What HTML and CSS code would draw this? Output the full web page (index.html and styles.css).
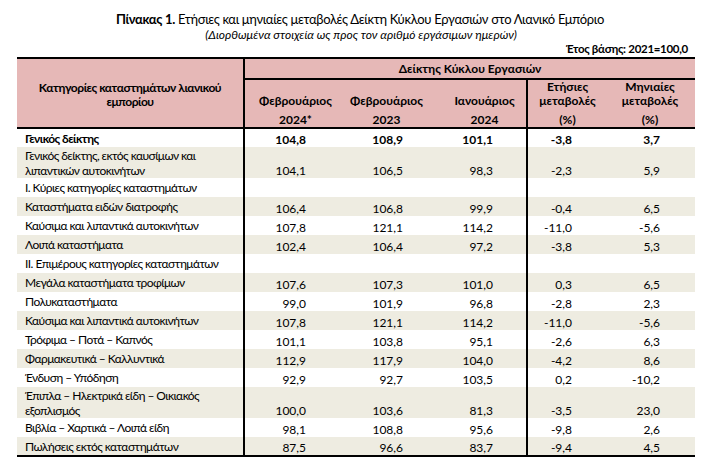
FILE: index.html
```html
<!DOCTYPE html>
<html lang="el">
<head>
<meta charset="utf-8">
<title>Πίνακας 1</title>
<link rel="stylesheet" href="styles.css">
</head>
<body>
<div class="page">
  <div class="title"><b>Πίνακας 1.</b> Ετήσιες και μηνιαίες μεταβολές Δείκτη Κύκλου Εργασιών στο Λιανικό Εμπόριο</div>
  <div class="subtitle">(Διορθωμένα στοιχεία ως προς τον αριθμό εργάσιμων ημερών)</div>
  <div class="base">Έτος βάσης: 2021=100,0</div>
  <table class="tbl">
    <colgroup>
      <col class="c-cat"><col class="c-n1"><col class="c-n2"><col class="c-n3"><col class="c-n4"><col class="c-n5">
    </colgroup>
    <thead>
      <tr class="h1">
        <th class="cat-h" rowspan="2">Κατηγορίες καταστημάτων λιανικού<br>εμπορίου</th>
        <th class="idx-h" colspan="5">Δείκτης Κύκλου Εργασιών</th>
      </tr>
      <tr class="h2">
        <th>Φεβρουάριος<span class="ln">2024*</span></th>
        <th>Φεβρουάριος<span class="ln">2023</span></th>
        <th>Ιανουάριος<span class="ln">2024</span></th>
        <th>Ετήσιες<br>μεταβολές<span class="ln">(%)</span></th>
        <th>Μηνιαίες<br>μεταβολές<span class="ln">(%)</span></th>
      </tr>
    </thead>
    <tbody>
      <tr class="bold"><td>Γενικός δείκτης</td><td>104,8</td><td>108,9</td><td>101,1</td><td>-3,8</td><td>3,7</td></tr>
      <tr class="alt dbl"><td>Γενικός δείκτης, εκτός καυσίμων και<br>λιπαντικών αυτοκινήτων</td><td>104,1</td><td>106,5</td><td>98,3</td><td>-2,3</td><td>5,9</td></tr>
      <tr><td>Ι. Κύριες κατηγορίες καταστημάτων</td><td></td><td></td><td></td><td></td><td></td></tr>
      <tr class="alt"><td>Καταστήματα ειδών διατροφής</td><td>106,4</td><td>106,8</td><td>99,9</td><td>-0,4</td><td>6,5</td></tr>
      <tr><td>Καύσιμα και λιπαντικά αυτοκινήτων</td><td>107,8</td><td>121,1</td><td>114,2</td><td>-11,0</td><td>-5,6</td></tr>
      <tr class="alt"><td>Λοιπά καταστήματα</td><td>102,4</td><td>106,4</td><td>97,2</td><td>-3,8</td><td>5,3</td></tr>
      <tr><td>ΙΙ. Επιμέρους κατηγορίες καταστημάτων</td><td></td><td></td><td></td><td></td><td></td></tr>
      <tr class="alt"><td>Μεγάλα καταστήματα τροφίμων</td><td>107,6</td><td>107,3</td><td>101,0</td><td>0,3</td><td>6,5</td></tr>
      <tr><td>Πολυκαταστήματα</td><td>99,0</td><td>101,9</td><td>96,8</td><td>-2,8</td><td>2,3</td></tr>
      <tr class="alt"><td>Καύσιμα και λιπαντικά αυτοκινήτων</td><td>107,8</td><td>121,1</td><td>114,2</td><td>-11,0</td><td>-5,6</td></tr>
      <tr><td>Τρόφιμα – Ποτά – Καπνός</td><td>101,1</td><td>103,8</td><td>95,1</td><td>-2,6</td><td>6,3</td></tr>
      <tr class="alt"><td>Φαρμακευτικά – Καλλυντικά</td><td>112,9</td><td>117,9</td><td>104,0</td><td>-4,2</td><td>8,6</td></tr>
      <tr><td>Ένδυση – Υπόδηση</td><td>92,9</td><td>92,7</td><td>103,5</td><td>0,2</td><td>-10,2</td></tr>
      <tr class="alt dbl"><td>Έπιπλα – Ηλεκτρικά είδη – Οικιακός<br>εξοπλισμός</td><td>100,0</td><td>103,6</td><td>81,3</td><td>-3,5</td><td>23,0</td></tr>
      <tr><td>Βιβλία – Χαρτικά – Λοιπά είδη</td><td>98,1</td><td>108,8</td><td>95,6</td><td>-9,8</td><td>2,6</td></tr>
      <tr class="alt last"><td>Πωλήσεις εκτός καταστημάτων</td><td>87,5</td><td>96,6</td><td>83,7</td><td>-9,4</td><td>4,5</td></tr>
    </tbody>
  </table>
</div>
</body>
</html>
```

FILE: styles.css
```css
html, body {
  margin: 0;
  padding: 0;
  background: #fff;
}
body {
  font-family: Lato, "Open Sans", "DejaVu Sans", sans-serif;
  color: #000;
}
.page {
  width: 678px;
  padding: 11px 20px 0 17px;
}
.title {
  text-align: center;
  font-size: 13px;
  letter-spacing: -0.33px;
  line-height: 16px;
  height: 16px;
  padding-left: 8px;
  white-space: nowrap;
}
.title b { font-weight: 700; }
.subtitle {
  text-align: center;
  font-style: italic;
  font-size: 12px;
  line-height: 14px;
  height: 14px;
  padding-left: 10px;
  margin-top: 1px;
}
.base {
  text-align: right;
  font-weight: 700;
  font-size: 11.5px;
  letter-spacing: -0.3px;
  line-height: 14px;
  height: 14px;
  padding-right: 7px;
}
.tbl {
  width: 678px;
  border-collapse: collapse;
  table-layout: fixed;
  font-size: 12px;
  margin-top: 1px;
}
.c-cat { width: 227px; }
.c-n1 { width: 95px; }
.c-n2 { width: 95px; }
.c-n3 { width: 93px; }
.c-n4 { width: 85px; }
.c-n5 { width: 83px; }

.tbl thead th {
  background: #e6b8b7;
  font-weight: 700;
  padding: 0;
}
.tbl thead tr:first-child th { border-top: 2px solid #000; }
.cat-h {
  text-align: center;
  vertical-align: middle;
  line-height: 14px;
  letter-spacing: -0.45px;
  padding-top: 3px !important;
  border-right: 2px solid #000;
  border-bottom: 2px solid #000;
}
.h1 { height: 21px; }
.idx-h {
  text-align: center;
  vertical-align: bottom;
  line-height: 16px;
  padding-bottom: 1px !important;
  border-bottom: 2px solid #000;
}
.h2 { height: 49px; }
.h2 th {
  text-align: center;
  vertical-align: bottom;
  line-height: 14px;
  padding-bottom: 0 !important;
  border-bottom: 2px solid #000;
}
.h2 .ln {
  display: block;
  margin-top: 5px;
  line-height: 14px;
}
.h2 th:nth-child(1) { padding-left: 7px !important; }
.h2 th:nth-child(3) { padding-left: 9px !important; }
.h2 th:nth-child(3) { border-right: 2px solid #000; }
.h2 th:nth-child(4) { padding-right: 5px !important; }
.h2 th:nth-child(5) { padding-right: 7px !important; }

.tbl tbody tr { height: 19px; }
.tbl tbody tr.dbl { height: 31px; }
.tbl tbody tr.alt td { background: #eeece1; }
.tbl tbody tr.bold td { font-weight: 700; }
.tbl tbody tr.last td { border-bottom: 2px solid #000; }
.tbl tbody td {
  padding: 0;
  line-height: 15px;
  text-align: right;
  vertical-align: bottom;
  white-space: nowrap;
}
.tbl tbody td:nth-child(1) {
  text-align: left;
  vertical-align: middle;
  padding-left: 8px;
  letter-spacing: -0.55px;
  border-right: 2px solid #000;
}
.tbl tbody td:nth-child(2) { padding-right: 33px; }
.tbl tbody td:nth-child(3) { padding-right: 31px; }
.tbl tbody td:nth-child(4) { padding-right: 33px; border-right: 2px solid #000; }
.tbl tbody td:nth-child(5) { padding-right: 40px; }
.tbl tbody td:nth-child(6) { padding-right: 35px; }
```
